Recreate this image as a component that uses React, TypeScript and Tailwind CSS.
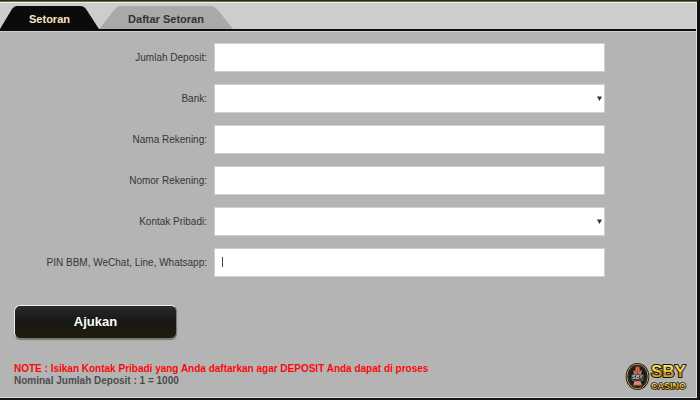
import React from "react";

type Field = { id: string; label: string; kind: "text" | "select"; caret?: boolean };

const fields: Field[] = [
  { id: "jumlah", label: "Jumlah Deposit:", kind: "text" },
  { id: "bank", label: "Bank:", kind: "select" },
  { id: "nama", label: "Nama Rekening:", kind: "text" },
  { id: "nomor", label: "Nomor Rekening:", kind: "text" },
  { id: "kontak", label: "Kontak Pribadi:", kind: "select" },
  { id: "pin", label: "PIN BBM, WeChat, Line, Whatsapp:", kind: "text", caret: true },
];

function Tabs() {
  return (
    <nav className="flex h-[23px] items-stretch">
      <button type="button" className="relative w-[99px] text-[11px] leading-[27px] font-bold text-[#fbe6c0]">
        <svg className="absolute inset-0 h-full w-full" viewBox="0 0 99 23" preserveAspectRatio="none" aria-hidden="true">
          <path d="M0 23 L12 3 Q14 0 17 0 H80 Q84 0 86 3 L99 23 Z" fill="#0b0b0b" />
        </svg>
        <span className="relative">Setoran</span>
      </button>
      <button type="button" className="relative w-[134px] text-[11px] leading-[27px] font-bold text-[#333333]">
        <svg className="absolute inset-0 h-full w-full" viewBox="0 0 134 23" preserveAspectRatio="none" aria-hidden="true">
          <path d="M0 23 L16 3 Q18 0 22 0 H111 Q115 0 118 3 L134 23 Z" fill="#a9a9a9" />
        </svg>
        <span className="relative">Daftar Setoran</span>
      </button>
    </nav>
  );
}

function Row({ field }: { field: Field }) {
  const box = "block h-[29px] w-full appearance-none rounded-none border border-[#cfcfcf] bg-white px-2 text-[11px] text-[#333333] outline-none";
  return (
    <div className="flex items-center gap-[7px]">
      <label htmlFor={field.id} className="w-[207px] shrink-0 text-right text-[10px] leading-3 text-[#363636]">
        {field.label}
      </label>
      <div className="relative mr-[91px] min-w-0 flex-1">
        {field.kind === "select" ? (
          <>
            <select id={field.id} className={box} defaultValue="">
              <option value="" />
            </select>
            <svg className="pointer-events-none absolute top-3 right-[3px] h-[5px] w-[5px]" viewBox="0 0 5 5" aria-hidden="true">
              <path d="M0 0.5 H5 L2.5 5 Z" fill="#333333" />
            </svg>
          </>
        ) : (
          <input id={field.id} type="text" className={box} />
        )}
        {field.caret && <span className="pointer-events-none absolute top-[9px] left-2 h-[10px] w-px bg-[#444444]" />}
      </div>
    </div>
  );
}

function Logo() {
  return (
    <svg className="h-[30px] w-[64px] shrink-0" viewBox="0 0 64 30" role="img" aria-label="SBY Casino">
      <defs>
        <linearGradient id="gold" x1="0" y1="0" x2="0" y2="1">
          <stop offset="0" stopColor="#fff3a0" />
          <stop offset="0.45" stopColor="#f2cf3e" />
          <stop offset="0.6" stopColor="#b88713" />
          <stop offset="1" stopColor="#f6dd5c" />
        </linearGradient>
      </defs>
      <ellipse cx="13.5" cy="15.5" rx="11.8" ry="13.5" fill="#18140e" />
      <ellipse cx="13.5" cy="15.5" rx="10.6" ry="12.3" fill="#17191b" stroke="#c4a052" strokeWidth="1" />
      <ellipse cx="13.5" cy="15.5" rx="8.9" ry="10.5" fill="none" stroke="#49422e" strokeWidth="0.6" />
      <path d="M10 13.5 L9 9 L11 10 L11.5 6.5 L13.5 5 L15.5 6.5 L16 10 L18 9 L17 13.5 Z" fill="#d9725d" />
      <path d="M13.5 5 V14 M11.5 7 L12.3 14 M15.5 7 L14.7 14" stroke="#8a392e" strokeWidth="0.6" />
      <path d="M8 14 Q13.5 12 19 14 V19.5 Q13.5 18 8 19.5 Z" fill="#15171a" stroke="#b9b6ad" strokeWidth="0.5" />
      <text x="13.5" y="18.4" textAnchor="middle" fontSize="5" fontWeight="bold" fill="#e3ded4" fontFamily="Liberation Sans, Arial, sans-serif">SBY</text>
      <path d="M10.5 20 H16.5 L18 24.5 H9 Z" fill="#d07460" />
      <path d="M10 22 H17" stroke="#e8b7a4" strokeWidth="0.7" />
      <g fontFamily="Liberation Sans, Arial, sans-serif" fontWeight="bold" fill="url(#gold)" stroke="#171207" paintOrder="stroke" strokeLinejoin="round">
        <text x="27" y="16" fontSize="17" strokeWidth="2">SBY</text>
        <text x="27" y="28" fontSize="9" strokeWidth="1.5">CASINO</text>
      </g>
    </svg>
  );
}

export default function App() {
  return (
    <div className="flex min-h-screen flex-col border-t border-r-[3px] border-b-2 border-t-[#2d281c] border-r-[#10100e] border-b-[#171717] bg-[#b4b4b4] font-['Liberation_Sans',Arial,sans-serif]">
      <div className="h-px bg-[#756b47]" />
      <main className="flex flex-1 flex-col border-r border-b border-[#dedede]">
        <header className="border-t border-t-[#eeeeee] bg-[#cdcdcd] pt-[3px]">
          <Tabs />
          <div className="h-[2px] bg-[#0d0d0d]" />
          <div className="h-px bg-[#d0d0d0]" />
        </header>
        <form className="flex flex-1 flex-col pt-[11px]" onSubmit={(e) => e.preventDefault()}>
          <div className="flex flex-col gap-3">
            {fields.map((field) => (
              <Row key={field.id} field={field} />
            ))}
          </div>
          <div className="mt-7 px-[14px]">
            <button
              type="submit"
              className="block h-[34px] w-[163px] rounded-md border border-[#777777] border-t-[#eeeeee] border-l-[#eeeeee] bg-linear-to-b from-[#292a2a] via-[#171714] to-[#211d0b] text-[13px] font-bold text-white shadow-[0_1px_1px_#777777]"
            >
              Ajukan
            </button>
          </div>
          <footer className="mt-auto flex items-end justify-between pr-[8px] pb-[6px] pl-[14px]">
            <div className="pb-[4px] text-[10px] leading-3 font-bold">
              <p className="text-[#fb0909]">NOTE : Isikan Kontak Pribadi yang Anda daftarkan agar DEPOSIT Anda dapat di proses</p>
              <p className="text-[#4c4c4c]">Nominal Jumlah Deposit : 1 = 1000</p>
            </div>
            <Logo />
          </footer>
        </form>
      </main>
    </div>
  );
}
